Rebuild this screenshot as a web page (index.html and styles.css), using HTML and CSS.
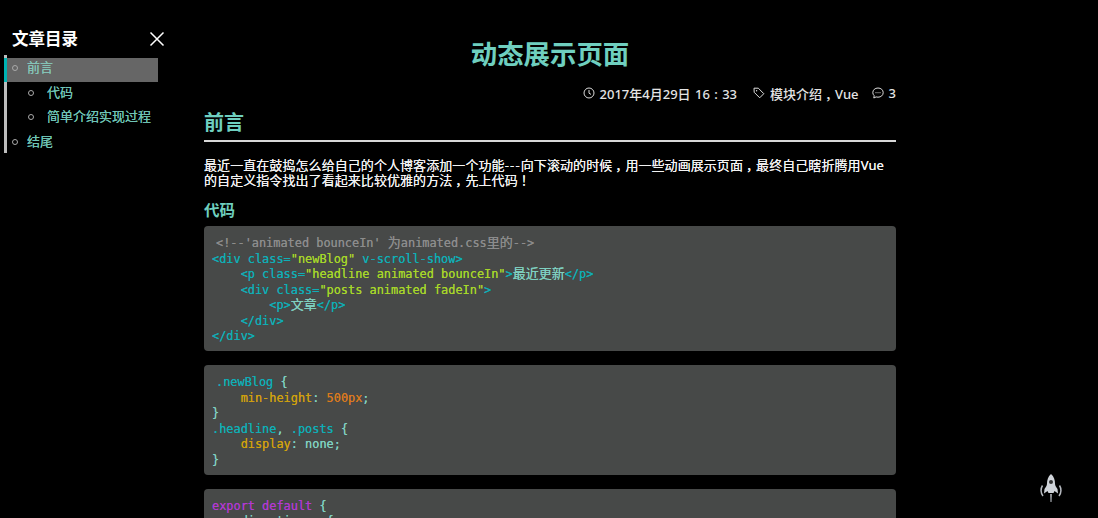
FILE: index.html
```html
<!DOCTYPE html>
<html lang="zh">
<head>
<meta charset="utf-8">
<title>动态展示页面</title>
<link rel="stylesheet" href="styles.css">
</head>
<body>
<div class="page">
  <aside class="toc">
    <div class="toc-head">
      <span class="toc-title">文章目录</span>
      <svg class="toc-close" width="16" height="16" viewBox="0 0 16 16"><path d="M1.5 1.5 14.500 14.500M14.500 1.500 1.500 14.500" stroke="#fff" stroke-width="1.500" fill="none"/></svg>
    </div>
    <ul class="toc-list">
      <li class="toc-item active"><i class="dot"></i>前言</li>
      <li class="toc-item sub"><i class="dot"></i>代码</li>
      <li class="toc-item sub"><i class="dot"></i>简单介绍实现过程</li>
      <li class="toc-item"><i class="dot"></i>结尾</li>
    </ul>
  </aside>
  <main class="post">
    <h1 class="post-title">动态展示页面</h1>
    <div class="meta">
      <svg class="meta-icon" width="12" height="12" viewBox="0 0 12 12"><circle cx="6" cy="6" r="5" fill="none" stroke="#ddd"/><path d="M6 3v3.200l2 1.200" fill="none" stroke="#ddd"/></svg>
      <span class="meta-text date">2017年4月29日 16 : 33</span>
      <svg class="meta-icon tag" width="12" height="12" viewBox="0 0 12 12"><path d="M1 1.200h4.300l5.500 5.500-4.100 4.100-5.500-5.500z" fill="none" stroke="#ddd"/><circle cx="3.600" cy="3.700" r=".7" fill="#ddd"/></svg>
      <span class="meta-text">模块介绍<span class="cp">，</span>Vue</span>
      <svg class="meta-icon comment" width="12" height="12" viewBox="0 0 12 12"><path d="M6 1c3 0 5.200 2 5.200 4.600S9 10.200 6 10.200c-.7 0-1.300-.1-1.900-.3L1.800 11l.4-2.300C1.300 7.800.8 6.800.8 5.600.8 3 3 1 6 1z" fill="none" stroke="#ddd"/><path d="M3.500 5.700h5" stroke="#ddd" stroke-dasharray="1 1"/></svg>
      <span class="meta-text">3</span>
    </div>
    <h2 class="h-main">前言</h2>
    <p class="para">最近一直在鼓捣怎么给自己的个人博客添加一个功能<span class="dash">---</span>向下滚动的时候<span class="cp">，</span>用一些动画展示页面<span class="cp">，</span>最终自己瞎折腾用Vue的自定义指令找出了看起来比较优雅的方法<span class="cp">，</span>先上代码<span class="cp">！</span></p>
    <h3 class="h-sub">代码</h3>
<pre class="code"><span class="cm lead">&lt;!--'animated bounceIn' <span class="cjk">为</span>animated.css<span class="cjk">里的</span>--&gt;</span>
<span class="tg">&lt;div class=</span><span class="st">"newBlog"</span><span class="tg"> v-scroll-show&gt;</span>
    <span class="tg">&lt;p class=</span><span class="st">"headline animated bounceIn"</span><span class="tg">&gt;</span><span class="cjk">最近更新</span><span class="tg">&lt;/p&gt;</span>
    <span class="tg">&lt;div class=</span><span class="st">"posts animated fadeIn"</span><span class="tg">&gt;</span>
        <span class="tg">&lt;p&gt;</span><span class="cjk">文章</span><span class="tg">&lt;/p&gt;</span>
    <span class="tg">&lt;/div&gt;</span>
<span class="tg">&lt;/div&gt;</span></pre>
<pre class="code"><span class="tg lead">.newBlog</span> {
    <span class="pr">min-height</span>: <span class="nm">500px</span>;
}
<span class="tg">.headline</span>, <span class="tg">.posts</span> {
    <span class="pr">display</span>: none;
}</pre>
<pre class="code"><span class="kw">export default</span> {
    directives: {
}</pre>
  </main>
</div>
<svg class="rocket" width="24" height="30" viewBox="0 0 24 30"><path d="M12 1c3 2.500 4 6 4 9.500 0 2 1 3.500 2.500 5.500l.5 4.500-3.500-2.500-1 2h-5l-1-2L5 20.500 5.500 16C7 14 8 12.500 8 10.500 8 7 9 3.500 12 1z" fill="#d0d4da"/><circle cx="12" cy="9" r="2" fill="#333"/><path d="M11.200 21h1.600l-.3 8h-1z" fill="#b5b9bf"/><path d="M3.500 12.500C1.500 15.500 1.500 20 4 23M20.500 12.500c2 3 2 7.500-.5 10.500" fill="none" stroke="#b5b9bf" stroke-width="1.500"/></svg>
</body>
</html>
```
FILE: styles.css
```css
html, body {
  margin: 0;
  height: 518px;
  overflow: hidden;
  background: #000;
}
body {
  color: #ececec;
  font-family: "Noto Sans", "Noto Sans CJK SC", sans-serif;
  font-size: 13px;
}
.page {
  display: flex;
  align-items: flex-start;
}
.toc {
  width: 154px;
  flex: none;
  margin-left: 4px;
  padding-top: 27px;
}
.toc-head {
  display: flex;
  align-items: center;
  justify-content: space-between;
  height: 24px;
  padding-left: 8px;
  margin-right: -7px;
  margin-bottom: 4px;
}
.toc-title {
  color: #fff;
  font-size: 16.500px;
  line-height: 24px;
  font-weight: 700;
}
.toc-list {
  list-style: none;
  box-sizing: border-box;
  height: 98px;
  margin: 0;
  padding: 3px 0 0;
  border-left: 3px solid #bdbdbd;
}
.toc-item {
  display: flex;
  align-items: flex-start;
  height: 24.500px;
  color: #6fc5b6;
  font-size: 13px;
  line-height: 19px;
  padding-left: 5px;
  text-shadow: 0 0 .4px currentColor;
}
.toc-item.active {
  height: 24px;
  margin-bottom: .5px;
  background: #666;
  color: #85c4b8;
  box-shadow: -3px 0 0 #00b4b4;
}
.toc-item.sub {
  padding-left: 21px;
}
.dot {
  width: 4px;
  height: 4px;
  border: 1px solid #aaa;
  border-radius: 50%;
  margin: 7px 9px 0 0;
  flex: none;
}
.toc-item.sub .dot {
  margin-right: 13px;
}
.post {
  width: 692px;
  flex: none;
  margin-left: 46px;
  padding-top: 35px;
}
.post-title {
  margin: 0 0 10px;
  text-align: center;
  color: #6fcfbf;
  font-size: 26.400px;
  line-height: 38px;
  font-weight: 700;
}
.meta {
  display: flex;
  justify-content: flex-end;
  align-items: center;
  height: 20px;
  font-size: 13px;
  color: #e4e4e4;
  font-weight: 500;
}
.meta-icon {
  margin-right: 5px;
}
.meta-icon.tag {
  margin-left: 16px;
}
.meta-icon.comment {
  margin-left: 13px;
}
.date {
  word-spacing: 1px;
}
.h-main {
  margin: 6px 0 0;
  padding-bottom: 3px;
  border-bottom: 2px solid #d8d8d8;
  color: #6fcfbf;
  font-size: 20px;
  line-height: 28px;
  font-weight: 700;
}
.para {
  margin: 15.500px 0 0;
  font-size: 13px;
  line-height: 15px;
  letter-spacing: .07px;
  font-weight: 400;
  color: #f2f2f2;
  text-shadow: 0 0 .5px currentColor;
}
.dash {
  letter-spacing: 1.200px;
}
.cp {
  padding-left: 3px;
  margin-right: -3px;
}
.h-sub {
  margin: 10.500px 0 4px;
  color: #6fcfbf;
  font-size: 15.500px;
  line-height: 24px;
  font-weight: 700;
}
.code {
  margin: 0 0 14px;
  padding: 10px 8px 6.500px;
  background: #474948;
  border-radius: 4px;
  color: #7fd0c0;
  font-family: "DejaVu Sans Mono", "Noto Sans CJK SC", monospace;
  font-size: 11.900px;
  line-height: 15.500px;
  text-shadow: 0 0 .4px currentColor;
}
.cjk {
  font-size: 13px;
  line-height: 0;
  font-family: "Noto Sans CJK SC", sans-serif;
}
.lead {
  margin-left: 4px;
}
.cm { color: #8c8c8c; }
.tg { color: #11adb5; }
.st { color: #a6d52a; }
.pr { color: #d0a00f; }
.nm { color: #d9791f; }
.kw { color: #b03ad0; }
.rocket {
  position: fixed;
  left: 1039px;
  top: 473px;
}
```
